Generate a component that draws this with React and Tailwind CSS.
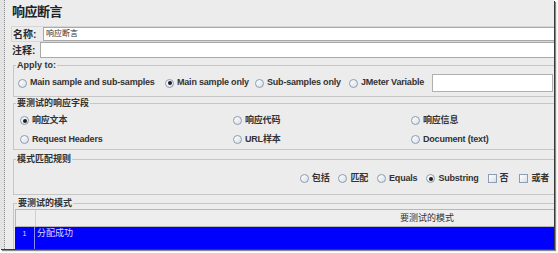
import React from "react";

function Radio({ checked }) {
  return (
    <span className="w-[9px] h-[9px] rounded-full border border-[#8d9cb0] bg-gradient-to-br from-white to-[#d9e0e8] flex items-center justify-center shrink-0">
      {checked && <span className="w-[4px] h-[4px] rounded-full bg-[#1e1e1e]" />}
    </span>
  );
}

function Check() {
  return <span className="w-[9px] h-[9px] border border-[#8d9cb0] bg-gradient-to-br from-white to-[#d9e0e8] shrink-0" />;
}

function RItem({ checked, label, className = "" }) {
  return (
    <div className={"flex items-center gap-[3px] shrink-0 " + className}>
      <Radio checked={checked} />
      <span className="whitespace-nowrap">{label}</span>
    </div>
  );
}

export default function App() {
  return (
    <div className="w-[558px] h-[253px] bg-white overflow-hidden font-['Liberation_Sans','Noto_Sans_CJK_SC',sans-serif] text-[#2a2a2a]">
      <div className="flex w-[554px] h-[249px] bg-[#ececec] shadow-[1px_1px_0_#3a3a3a,2px_2px_1px_#8a8a8a] overflow-hidden">
        <div className="w-[5px] shrink-0 bg-[#e2e2e2] border-r border-dotted border-[#8c8c8c]" />
        <div className="flex-1 min-w-0 flex flex-col pl-[7px]">
          <div className="h-[26px] shrink-0 pt-[4px] text-[13px] leading-[16px] font-bold tracking-[-0.5px] text-[#222]">响应断言</div>

          <div className="flex h-[16px] shrink-0 items-stretch border-y border-l border-[#d6d6d6] -ml-[1px]">
            <div className="w-[31px] pl-[1px] shrink-0 flex items-center text-[10px] font-bold">名称:</div>
            <div className="flex-1 bg-white border border-[#a9a9a9] border-r-0 flex items-center pl-[2px] text-[8px] text-[#333]">响应断言</div>
          </div>
          <div className="flex h-[16px] shrink-0 items-stretch">
            <div className="w-[28px] shrink-0 flex items-center text-[10px] font-bold">注释:</div>
            <div className="flex-1 bg-white border border-[#a9a9a9] border-r-0" />
          </div>

          <fieldset className="mt-[2px] ml-[1px] mr-[-4px] border border-[#c6c6c6] h-[37px] shrink-0">
            <legend className="ml-[2px] px-[1px] text-[9px] leading-[11px] font-bold text-[#333]">Apply to:</legend>
            <div className="flex items-center h-[24px] text-[9px] font-bold tracking-[-0.2px] text-[#333] pl-[4px]">
              <RItem checked={false} label="Main sample and sub-samples" className="w-[147px]" />
              <RItem checked label="Main sample only" className="w-[90px]" />
              <RItem checked={false} label="Sub-samples only" className="w-[94px]" />
              <RItem checked={false} label="JMeter Variable" className="w-[83px]" />
              <div className="w-[121px] h-[18px] bg-white border border-[#b0b0b0] shrink-0" />
            </div>
          </fieldset>

          <fieldset className="mt-[0px] ml-[1px] mr-[-4px] border border-[#c6c6c6] h-[53px] shrink-0">
            <legend className="ml-[2px] px-[1px] text-[9px] leading-[12px] font-bold text-[#333]">要测试的响应字段</legend>
            <div className="grid grid-cols-[213px_178px_1fr] auto-rows-[19px] pt-[2px] pl-[6px] text-[9px] font-bold tracking-[-0.2px] text-[#333]">
              <RItem checked label="响应文本" />
              <RItem checked={false} label="响应代码" />
              <RItem checked={false} label="响应信息" />
              <RItem checked={false} label="Request Headers" />
              <RItem checked={false} label="URL样本" />
              <RItem checked={false} label="Document (text)" />
            </div>
          </fieldset>

          <fieldset className="mt-[3px] ml-[1px] mr-[-4px] border border-[#c6c6c6] h-[42px] shrink-0">
            <legend className="ml-[2px] px-[1px] text-[9px] leading-[12px] font-bold text-[#333]">模式匹配规则</legend>
            <div className="flex items-center h-[29px] pb-[2px] pr-[8px] justify-end gap-[9px] text-[9px] font-bold tracking-[-0.2px] text-[#333]">
              <RItem checked={false} label="包括" />
              <RItem checked={false} label="匹配" />
              <RItem checked={false} label="Equals" />
              <RItem checked label="Substring" />
              <div className="flex items-center gap-[3px]"><Check /><span>否</span></div>
              <div className="flex items-center gap-[3px] ml-[2px]"><Check /><span>或者</span></div>
            </div>
          </fieldset>

          <fieldset className="mt-[2px] ml-[1px] mr-[-4px] border border-[#c6c6c6] border-b-0 flex-1 min-h-0 pl-[1px] overflow-hidden">
            <legend className="ml-[2px] px-[1px] text-[9px] leading-[12px] font-bold text-[#333]">要测试的模式</legend>
            <div className="flex flex-col overflow-hidden h-full">
              <div className="flex h-[18px] shrink-0 bg-[#eeeeee] border border-[#b8b8b8] border-r-0">
                <div className="w-[20px] shrink-0 border-r border-[#d0d0d0]" />
                <div className="w-[782px] shrink-0 text-center text-[9px] leading-[16px] text-[#333]">要测试的模式</div>
              </div>
              <div className="flex h-[24px] shrink-0 bg-[#0000fd] text-[#dcdcff]">
                <div className="w-[20px] shrink-0 border-r border-[#8a8aff] text-center text-[7px] leading-[14px]">1</div>
                <div className="pl-[2px] text-[9px] leading-[13px]">分配成功</div>
              </div>
            </div>
          </fieldset>
        </div>
      </div>
    </div>
  );
}
